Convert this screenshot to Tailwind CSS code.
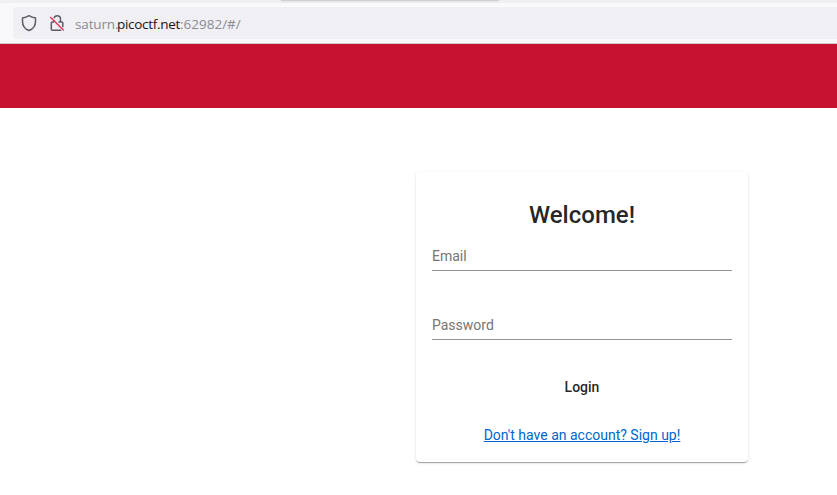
<!DOCTYPE html>
<html lang="en">
<head>
<meta charset="utf-8">
<title>Welcome</title>
<script src="https://cdn.jsdelivr.net/npm/@tailwindcss/browser@4"></script>
</head>
<body class="h-screen overflow-hidden bg-white font-['Roboto',sans-serif] text-black/87">
  <div class="h-11 border-b border-[#cccccf] bg-[#f9f9fb]">
    <div class="h-[3px] overflow-hidden bg-[#f0f0f4]">
      <div class="ml-[281px] h-px w-[218px] bg-[#d0d0d3] shadow-[0_0_3px_#c4c4c8]"></div>
    </div>
    <div class="mt-1 ml-[13px] flex h-8 items-center rounded-l bg-[#f0f0f4]">
      <svg class="ml-2 shrink-0" width="16" height="18" viewBox="0 0 16 18" fill="none" stroke="#5b5b66" stroke-width="1.5" stroke-linejoin="round"><path d="M8 1.7C6 3 3.8 3.7 1.5 4V7.5C1.5 12.3 4 15 8 16.5C12 15 14.5 12.3 14.5 7.5V4C12.2 3.7 10 3 8 1.7Z"/></svg>
      <svg class="ml-3 shrink-0" width="16" height="18" viewBox="0 0 16 18" fill="none" stroke="#5b5b66" stroke-width="1.5" stroke-linejoin="round"><path d="M5 4.2C5.5 2.6 6.6 1.8 8.1 1.8C10.1 1.8 11.5 3.2 11.5 5.2V8H12.9Q13.8 8 13.8 9V13.2M9.4 8H11.5M5 8H3.4Q2.3 8 2.3 9V15.2Q2.3 16.2 3.4 16.2H12.2M5 6.3V8"/><path d="M1.2 3L14.8 16.6" stroke="#e8305a" stroke-width="1.4"/></svg>
      <div class="ml-[10px] flex pt-0.5 font-['Open_Sans',sans-serif] text-[13.5px] leading-5 whitespace-pre text-[#8b8b92]"><span class="w-[42px] tracking-[-0.15px]">saturn.</span><span class="w-[63px] tracking-[-0.3px] text-[#15141a]">picoctf.net</span><span>:62982/#/</span></div>
    </div>
  </div>
  <header class="h-16 bg-[#c41230]"></header>
  <main class="pt-16 pl-[416px]">
    <form class="flex h-[290px] w-[332px] flex-col rounded bg-white px-4 shadow-[0_2px_1px_-1px_rgba(0,0,0,0.2),0_1px_1px_0_rgba(0,0,0,0.14),0_1px_3px_0_rgba(0,0,0,0.12)]">
      <h1 class="mt-[27px] text-center text-2xl font-medium">Welcome!</h1>
      <label class="mt-[11px] h-[29px] border-b border-[#949494] pt-1 text-sm text-[#757575]">Email</label>
      <label class="mt-10 h-[29px] border-b border-[#949494] pt-1 text-sm text-[#757575]">Password</label>
      <button type="button" class="mt-[37px] h-5 text-sm font-medium">Login</button>
      <a class="mt-7 text-center text-sm text-[#0066cc] underline">Don't have an account? Sign up!</a>
    </form>
  </main>
</body>
</html>
